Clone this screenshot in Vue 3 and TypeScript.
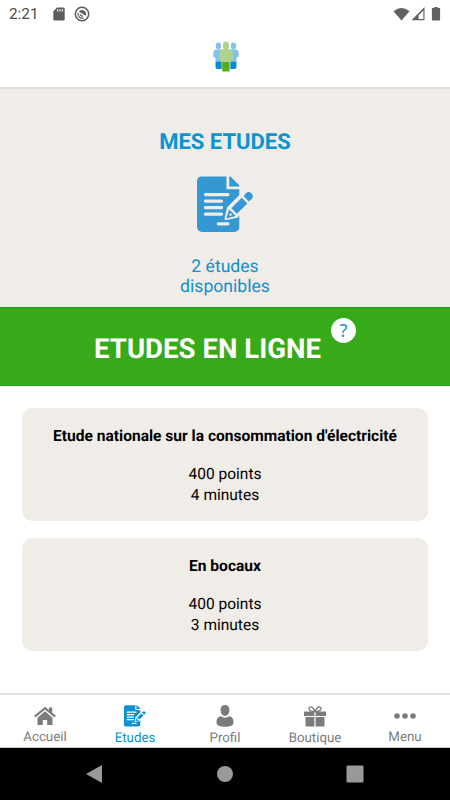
<script setup lang="ts">
import { h, type FunctionalComponent } from 'vue'

interface Study { title: string; points: number; minutes: number }
interface Tab { id: string; label: string; active?: boolean }

const studies: Study[] = [
  { title: "Etude nationale sur la consommation d'électricité", points: 400, minutes: 4 },
  { title: 'En bocaux', points: 400, minutes: 3 },
]

const tabs: Tab[] = [
  { id: 'home', label: 'Accueil' },
  { id: 'studies', label: 'Etudes', active: true },
  { id: 'profile', label: 'Profil' },
  { id: 'shop', label: 'Boutique' },
  { id: 'menu', label: 'Menu' },
]

// Document with a pencil; `paper` is the colour of the gaps and of the written lines.
const DocIcon: FunctionalComponent<{ paper: string }> = (props) =>
  h('svg', { viewBox: '0 0 58 57', 'aria-hidden': 'true' }, [
    h('path', { fill: 'currentColor', d: 'M4.500 0H30v13h13v38.500a5 5 0 0 1-5 5H5a5 5 0 0 1-5-5V4.500A4.500 4.500 0 0 1 4.500 0Z' }),
    h('path', { fill: 'currentColor', d: 'M32.800 0H34L43 9v1.200H32.800Z' }),
    h('path', {
      stroke: props.paper, 'stroke-width': 3.3, 'stroke-linecap': 'round', fill: 'none',
      d: 'M8.600 18.400H31.500M8.600 25H25M8.600 31.600H25M8.600 38.200H25M21.700 48.100H31.500',
    }),
    h('path', { fill: props.paper, stroke: props.paper, 'stroke-width': 3, 'stroke-linejoin': 'round', d: 'M29.500 42.800 32 32 47 17 54 24 40.500 40.500Z' }),
    h('path', { fill: 'currentColor', d: 'M35 32.200 45.500 21.700 51.200 27.400 40.700 37.900Z' }),
    h('path', { fill: 'currentColor', 'fill-rule': 'evenodd', d: 'M29.800 42.700 32.800 33.600 39.500 40.300ZM33.800 37 32.700 40.200 36 39.300Z' }),
    h('path', { fill: 'currentColor', d: 'M47.500 20.200 49.700 17.400A3.900 3.900 0 1 1 55.600 23L52.900 25.400Z' }),
  ])
DocIcon.props = ['paper']
</script>

<template>
  <div class="screen">
    <header class="status">
      <span class="clock">2:21</span>
      <svg class="sd" viewBox="0 0 12 14"><path fill="#5c5c5c" d="M4 .5h6.500a1.200 1.200 0 0 1 1.200 1.200v10.600a1.200 1.200 0 0 1-1.200 1.200h-9a1.200 1.200 0 0 1-1.200-1.200V4.200Z" /><path stroke="#fff" stroke-width="1" d="M4.700 2v2.600M7 2v2.600M9.300 2v2.600" /></svg>
      <svg class="sync" viewBox="0 0 16 16"><circle cx="8" cy="8" r="6.700" fill="none" stroke="#5c5c5c" stroke-width="1.500" /><path fill="#5c5c5c" d="M4.800 5.400a4.200 4.200 0 0 1 7 4.400Z" /><path d="M4.100 7a4.200 4.200 0 0 0 5.500 4.900M6 8.600l2.800 1.900" fill="none" stroke="#5c5c5c" stroke-width="1.300" /></svg>
      <svg class="signals" viewBox="0 0 50 16">
        <path fill="#616161" d="M.5 4.200Q8.500-2.200 16.500 4.200L8.500 13.500Z" />
        <path fill="#616161" fill-rule="evenodd" d="M31.500 0v13.200H18.500ZM30.400 3.400 25.600 8.200v3.900h4.800Z" />
        <path fill="#616161" d="M41.300 1V0h3.400v1h1.600a.8.800 0 0 1 .8.800v10.900a.8.800 0 0 1-.8.800h-6.600a.8.800 0 0 1-.8-.8V1.800a.8.800 0 0 1 .8-.8Z" />
      </svg>
    </header>

    <div class="brand">
      <svg viewBox="0 0 26 32">
        <g fill="#82c3ec">
          <ellipse cx="5.500" cy="5" rx="2.700" ry="3.400" /><ellipse cx="20.500" cy="5" rx="2.700" ry="3.400" />
          <path d="M2.500 8.500h6l2 3v9h-8V17L.3 15.500V12q0-3 2.200-3.500Z" /><path d="M23.500 8.500h-6l-2 3v9h8V17l2.200-1.500V12q0-3-2.200-3.500Z" />
        </g>
        <path fill="#078bd2" d="M2.500 20.500H8.700V28H4.500q-2 0-2-2ZM23.500 20.500H17.300V28h4.200q2 0 2-2Z" />
        <ellipse cx="13" cy="4.600" rx="3.100" ry="4.200" fill="#afd38c" />
        <path fill="#afd38c" d="M9.800 8h6.400q3.600 1 3.600 5v5q0 2-2.700 3H8.900Q6.200 20 6.200 18v-5q0-4 3.600-5Z" />
        <path fill="#58ac19" d="M9.200 21h7.400v9.500H9.200Z" />
      </svg>
    </div>

    <section class="summary">
      <h1>MES ETUDES</h1>
      <DocIcon class="doc-large" paper="#f0ede8" />
      <p>2 études<br>disponibles</p>
    </section>

    <section class="banner">
      <h2>ETUDES EN LIGNE</h2>
      <button class="help" type="button">?</button>
    </section>

    <main class="list">
      <article v-for="study in studies" :key="study.title" class="card">
        <h3>{{ study.title }}</h3>
        <p>{{ study.points }} points<br>{{ study.minutes }} minutes</p>
      </article>
    </main>

    <nav class="tabs">
      <a v-for="tab in tabs" :key="tab.id" class="tab" :class="{ active: tab.active }">
        <span class="tab-icon">
          <svg v-if="tab.id === 'home'" width="22" height="20" viewBox="0 0 22 20"><path fill="currentColor" d="M3.500 11.700 11 5.200l7.500 6.500V19h-5.300v-5H8.800v5H3.500Z" /><path fill="currentColor" d="M15 1.500h3.200v5.800L15 4.500Z" /><path d="M.8 10.600 11 2.200l10.200 8.400" fill="none" stroke="currentColor" stroke-width="2.200" /></svg>
          <DocIcon v-else-if="tab.id === 'studies'" class="doc-small" paper="#fff" />
          <svg v-else-if="tab.id === 'profile'" width="18" height="22" viewBox="0 0 18 22"><path fill="currentColor" d="M9 0c2.800 0 4.400 1.800 4.400 4.800 0 3.500-1.800 6.200-4.400 6.200S4.600 8.300 4.600 4.800C4.600 1.800 6.200 0 9 0ZM4.800 11.300Q9 14.200 13.200 11.300C16.500 12 17.500 14 17.500 18c0 2.300-3.500 3.700-8.500 3.700S.5 20.300.5 18C.5 14 1.500 12 4.800 11.300Z" /></svg>
          <svg v-else-if="tab.id === 'shop'" width="22" height="22" viewBox="0 0 22 22"><path fill="currentColor" d="M0 6.500h10.400v4.500H0Zm11.600 0H22V11H11.600ZM1.500 12h8.900v9.500H1.500Zm10.100 0h8.900v9.500h-8.900Z" /><path d="M11 6.500C8 6.500 5 5.500 5 3.500S8.500.3 11 6.500ZM11 6.500c3 0 6-1 6-3S13.500.3 11 6.500Z" fill="none" stroke="currentColor" stroke-width="1.300" /></svg>
          <svg v-else width="22" height="20" viewBox="0 0 22 20"><g fill="currentColor"><circle cx="3" cy="10" r="2.800" /><circle cx="11" cy="10" r="2.800" /><circle cx="19" cy="10" r="2.800" /></g></svg>
        </span>
        <span class="tab-label">{{ tab.label }}</span>
      </a>
    </nav>

    <footer class="system">
      <svg viewBox="0 0 18 18"><path d="M1 9 17 0v18Z" fill="#999" /></svg>
      <svg viewBox="0 0 18 18"><circle cx="9" cy="9" r="8" fill="#999" /></svg>
      <svg viewBox="0 0 18 18"><rect x=".5" y=".5" width="17" height="17" rx="1" fill="#999" /></svg>
    </footer>
  </div>
</template>

<style>
body { margin: 0; }
</style>

<style scoped>
.screen { display: flex; flex-direction: column; width: 450px; height: 800px; overflow: hidden; background: #fff; color: #000; font-family: Roboto, "Liberation Sans", sans-serif; text-rendering: geometricPrecision; }
h1, h2, h3, p { margin: 0; }
.status { display: flex; align-items: center; height: 27px; flex: none; padding: 0 7px 0 9px; box-sizing: border-box; }
.clock { width: 44px; color: #4d4d4d; font-size: 15.300px; line-height: 27px; padding-top: 1px; }
.sd { width: 12px; height: 14px; }
.sync { width: 16px; height: 16px; margin-left: 9px; }
.signals { width: 50px; height: 16px; margin-left: auto; padding-top: 2px; }
.brand { display: flex; justify-content: center; height: 60px; flex: none; box-sizing: border-box; padding: 14px 0 0 1px; }
.brand svg { width: 26px; height: 32px; }
.summary { display: flex; flex-direction: column; align-items: center; height: 220px; flex: none; box-sizing: border-box; padding-top: 40px; background: #f0ede8; border-top: 2px solid #dededc; text-align: center; color: #108fcf; }
h1 { font-size: 22px; line-height: 28px; font-weight: 700; color: #0995d3; }
.doc-large { width: 57px; height: 57px; margin: 19px 0 0; color: #3498d2; }
.summary p { font-size: 17.600px; line-height: 20px; margin-top: 24px; }
.banner { display: flex; height: 79px; flex: none; box-sizing: border-box; padding: 10px 0 0 94px; background: #36aa18; border-top: 1px solid #19a31a; border-bottom: 1px solid #19a31a; }
h2 { width: 227px; margin-right: 10px; padding-top: 13px; color: #fff; font-size: 27.600px; line-height: 36px; font-weight: 700; white-space: nowrap; }
.help { width: 25px; height: 25px; padding: 0; border: 0; border-radius: 50%; background: #fff; color: #2788cc; font: 17.500px/25px "Noto Sans", sans-serif; }
.list { display: flex; flex-direction: column; gap: 17px; flex: 1; padding: 22px 22px 0; }
.card { height: 113px; box-sizing: border-box; padding-top: 18px; border-radius: 10px; background: #f0ede8; text-align: center; }
h3 { font-size: 15.550px; line-height: 21px; font-weight: 700; }
.card p { margin-top: 17px; font-size: 15.500px; line-height: 21px; }
.tabs { display: flex; height: 55px; flex: none; box-sizing: border-box; border-top: 2px solid #e3e3e3; border-bottom: 1px solid #c8c8c8; }
.tab { display: flex; flex: 1; flex-direction: column; align-items: center; color: #7b7b7b; }
.tab.active { color: #0c92d1; }
.tab-icon { display: flex; align-items: center; justify-content: center; height: 22px; padding-top: 10px; }
.doc-small { width: 22px; height: 22px; }
.tab-label { font-size: 13.300px; line-height: 18px; margin-top: 3px; }
.system { display: flex; align-items: center; justify-content: space-between; height: 52px; flex: none; box-sizing: border-box; padding: 0 86px 0 85px; background: #000; }
.system svg { width: 18px; height: 18px; }
</style>
